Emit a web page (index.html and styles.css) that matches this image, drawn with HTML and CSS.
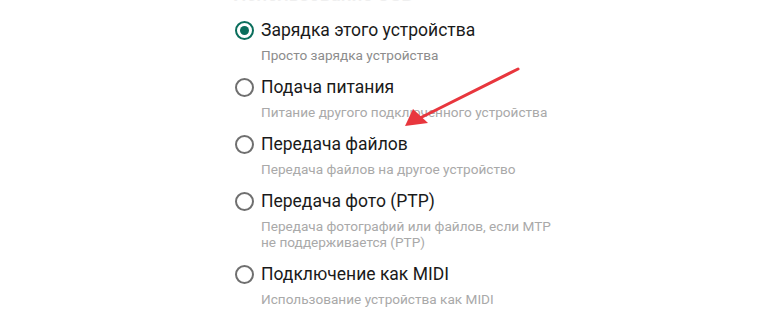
FILE: index.html
```html
<!DOCTYPE html>
<html lang="ru">
<head>
<meta charset="utf-8">
<link rel="stylesheet" href="styles.css">
</head>
<body>
<div class="page">
  <div class="heading">Использование USB</div>
  <ul class="options">
    <li class="option">
      <span class="radio checked"></span>
      <div class="text">
        <div class="title">Зарядка этого устройства</div>
        <div class="sub dark">Просто зарядка устройства</div>
      </div>
    </li>
    <li class="option">
      <span class="radio"></span>
      <div class="text">
        <div class="title">Подача питания</div>
        <div class="sub">Питание другого подключенного устройства</div>
      </div>
    </li>
    <li class="option">
      <span class="radio"></span>
      <div class="text">
        <div class="title">Передача файлов</div>
        <div class="sub">Передача файлов на другое устройство</div>
      </div>
    </li>
    <li class="option">
      <span class="radio"></span>
      <div class="text">
        <div class="title">Передача фото (PTP)</div>
        <div class="sub">Передача фотографий или файлов, если MTP<br>не поддерживается (PTP)</div>
      </div>
    </li>
    <li class="option">
      <span class="radio"></span>
      <div class="text">
        <div class="title">Подключение как MIDI</div>
        <div class="sub">Использование устройства как MIDI</div>
      </div>
    </li>
  </ul>
  <svg class="arrow" width="770" height="330" viewBox="0 0 770 330">
    <line x1="518" y1="84" x2="420" y2="133" stroke="#e8363d" stroke-width="3" stroke-linecap="round"/>
    <polygon points="405,141 413,124 428,138" fill="#e8363d"/>
  </svg>
</div>
</body>
</html>
```
FILE: styles.css
```css
html, body {
  margin: 0;
  padding: 0;
  background: #ffffff;
}
body {
  width: 770px;
  height: 330px;
  overflow: hidden;
  font-family: Roboto, "Noto Sans", sans-serif;
}
.page {
  position: relative;
  width: 770px;
  height: 330px;
  padding-left: 235px;
  box-sizing: border-box;
}
.heading {
  margin-top: -15px;
  margin-left: -2px;
  height: 20px;
  font-size: 19px;
  line-height: 20px;
  font-weight: 500;
  color: #efefef;
}
.options {
  list-style: none;
  margin: 13px 0 0 0;
  padding: 0;
  display: flex;
  flex-direction: column;
  gap: 12px;
}
.option {
  display: flex;
  align-items: flex-start;
  gap: 7px;
}
.radio {
  width: 19px;
  height: 19px;
  box-sizing: border-box;
  border: 2px solid #6f6f6f;
  border-radius: 50%;
  margin-top: 3px;
  flex: none;
  display: flex;
  align-items: center;
  justify-content: center;
}
.radio.checked {
  border-color: #0a6e5c;
}
.radio.checked::after {
  content: "";
  width: 9px;
  height: 9px;
  border-radius: 50%;
  background: #0a6e5c;
}
.text {
  display: flex;
  flex-direction: column;
  gap: 5px;
}
.title {
  font-size: 17.5px;
  line-height: 24px;
  color: #1a1a1a;
}
.sub {
  font-size: 13.6px;
  line-height: 16px;
  color: #a9a9a9;
}
.sub.dark {
  color: #8c8c8c;
}
.arrow {
  position: absolute;
  left: 0;
  top: 0;
}
```
